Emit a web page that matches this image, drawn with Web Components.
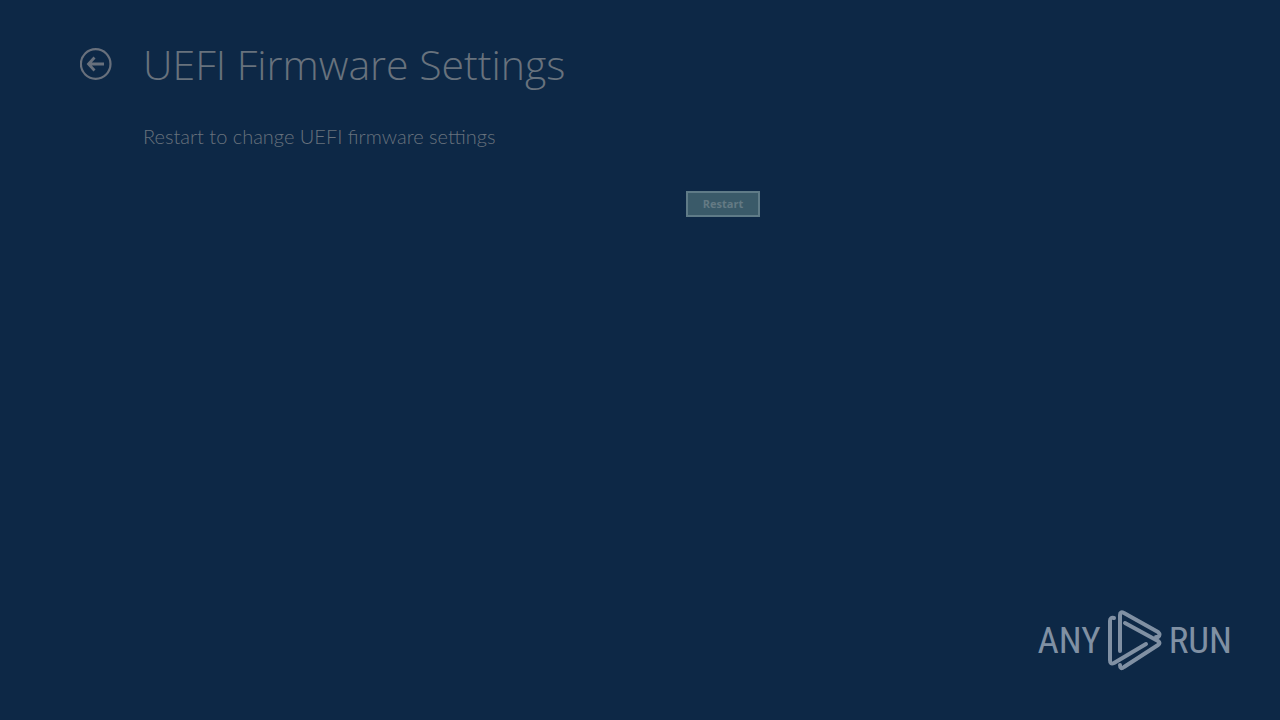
<!DOCTYPE html>
<html lang="en">
<head>
<meta charset="utf-8">
<title>UEFI Firmware Settings</title>
<style>
html, body { height: 100%; }
body { margin: 0; background: #0d2846; font-family: "Open Sans", "Noto Sans", sans-serif; }
</style>
</head>
<body>
<recovery-screen>
  <back-button slot="back"></back-button>
  <span slot="title">UEFI Firmware Settings</span>
  <span slot="text">Restart to change UEFI firmware settings</span>
  <action-button slot="action">Restart</action-button>
  <brand-mark slot="brand"></brand-mark>
</recovery-screen>
<script>
const define = (name, html) => customElements.define(name, class extends HTMLElement {
  constructor() {
    super();
    this.attachShadow({ mode: "open" }).innerHTML = html;
  }
});

define("back-button", `
<style>
:host { display: block; width: 32px; height: 32px; }
button { display: block; width: 100%; height: 100%; padding: 0; border: 0; background: none; color: #68707c; }
svg { display: block; }
</style>
<button type="button" aria-label="Back">
  <svg width="32" height="32" viewBox="0 0 32 32" fill="none" stroke="currentColor">
    <circle cx="15.700" cy="16" r="14.800" stroke-width="2.200"/>
    <path d="M24 16H9M14.500 9.500L8.500 16L14.500 22.500" stroke-width="2.800"/>
  </svg>
</button>`);

define("action-button", `
<style>
:host { display: block; }
button { display: block; box-sizing: border-box; min-width: 74px; height: 26px; padding: 0 12px; border: 2px solid #5f7b87;
  background: #3a5a69; color: #647a84; font: bold 11px/20px "Open Sans", "Noto Sans", sans-serif; }
</style>
<button type="button"><slot></slot></button>`);

define("brand-mark", `
<style>
:host { display: flex; align-items: center; gap: 6px; color: #8090a3; font: 37px/60px "Roboto Condensed", Roboto, sans-serif; }
svg { display: block; }
</style>
<span>ANY</span>
<svg width="56" height="62" viewBox="0 0 56 62" fill="none" stroke="currentColor" stroke-width="4" stroke-linecap="round" stroke-linejoin="round" aria-hidden="true">
  <path d="M7 8Q3 7 3 11V50Q3 55 7 53L39 34"/>
  <path d="M13 41V5Q13 1 17 3L51 22Q54 25 51 27L49 27"/>
  <path d="M18 13L51 31Q54 33 51 35L17 57Q13 60 13 55"/>
</svg>
<span>RUN</span>`);

define("recovery-screen", `
<style>
:host { display: flex; flex-direction: column; justify-content: space-between; box-sizing: border-box; min-height: 100%; padding: 32px 48px 48px 80px; }
main { display: grid; grid-template-columns: 32px minmax(0, 617px); column-gap: 31px; align-items: center; color: #68727d; }
h1 { margin: 0; font-size: 41px; line-height: 64px; font-weight: 300; }
p { grid-column: 2; margin: 24px 0 0; font: 300 20px/32px Lato, "Open Sans", sans-serif; }
.action { grid-column: 2; justify-self: end; margin-top: 39px; }
footer { display: flex; justify-content: flex-end; }
</style>
<main>
  <slot name="back"></slot>
  <h1><slot name="title"></slot></h1>
  <p><slot name="text"></slot></p>
  <div class="action"><slot name="action"></slot></div>
</main>
<footer><slot name="brand"></slot></footer>`);
</script>
</body>
</html>
